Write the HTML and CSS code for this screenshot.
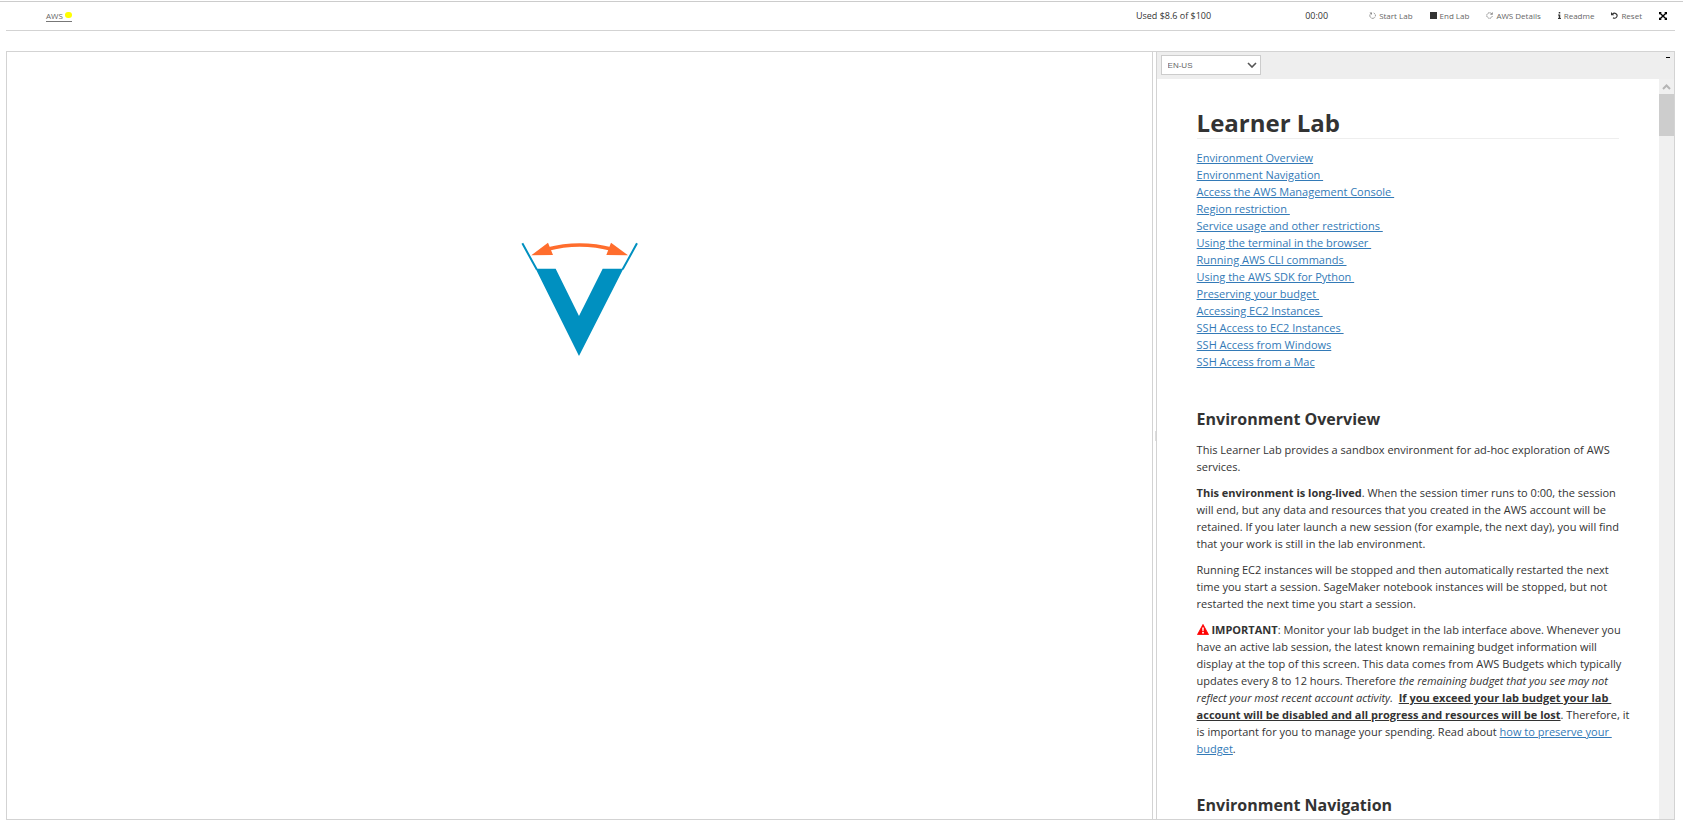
FILE: index.html
```html
<!DOCTYPE html>
<html lang="en">
<head>
<meta charset="utf-8">
<title>Learner Lab</title>
<link rel="stylesheet" href="styles.css">
</head>
<body>
<header class="topbar">
  <a class="aws" href="#aws">AWS <span class="status"></span></a>
  <div class="session">
    <span class="budget">Used $8.6 of $100</span>
    <span class="timer">00:00</span>
  </div>
  <nav class="actions">
    <button type="button"><svg class="icon faint" viewBox="0 0 14 14"><path d="M9.5 2A5.6 5.6 0 1 1 4 2.6" fill="none" stroke="currentColor" stroke-width="2" stroke-dasharray="3 1.2"/><path d="M1 1h5v5z" fill="currentColor"/></svg>Start Lab</button>
    <button type="button"><svg class="icon dark" viewBox="0 0 14 14"><path d="M0 0h14v14H0z" fill="currentColor"/></svg>End Lab</button>
    <button type="button"><svg class="icon faint" viewBox="0 0 14 14"><path d="M11 3.2A5.5 5.5 0 1 0 12.5 8" fill="none" stroke="currentColor" stroke-width="2" stroke-dasharray="3 1.2"/><path d="M13.5 0v5.5H8z" fill="currentColor"/></svg>AWS Details</button>
    <button type="button"><svg class="icon narrow dark" viewBox="0 0 6 14"><path d="M1.5 0h3v3h-3zM0 5h4.5v7H6v2H0v-2h1.5V7H0z" fill="currentColor"/></svg>Readme</button>
    <button type="button"><svg class="icon dark" viewBox="0 0 14 14"><path d="M3 4.5A5 5 0 1 1 4 11.5" fill="none" stroke="currentColor" stroke-width="2.2"/><path d="M0 0l6.500 6.500H0z" fill="currentColor"/></svg>Reset</button>
    <button type="button" class="expand" aria-label="Full screen"><svg class="icon" viewBox="0 0 14 14"><path d="M2 2l10 10M12 2L2 12" stroke="currentColor" stroke-width="2.400"/><path d="M0 0h5L0 5zM14 0v5L9 0zM0 14V9l5 5zM14 14H9l5-5z" fill="currentColor"/></svg></button>
  </nav>
</header>
<main class="workspace">
  <section class="terminal" aria-label="Terminal">
    <svg class="logo" viewBox="34 36 351 345" role="img" aria-label="Vocareum">
      <path d="M38 40L81 118M382 40L339 118" stroke="#0090c0" stroke-width="6"/>
      <path d="M78 116h60l70 142 71-142h62L208 378z" fill="#0090c0"/>
      <path d="M112 58Q210 32 308 58" fill="none" stroke="#ff6d2d" stroke-width="11"/>
      <path d="M65 76l50-38 15 37zM355 76l-51-38-14 37z" fill="#ff6d2d"/>
    </svg>
  </section>
  <div class="splitter"><span class="grip"></span></div>
  <section class="guide">
    <div class="guide-bar">
      <div class="picker">
        <select aria-label="Language"><option>EN-US</option></select>
        <svg class="chevron" viewBox="0 0 10 6"><path d="M1 1l4 4 4-4" fill="none" stroke="#555" stroke-width="1.600"/></svg>
      </div>
      <button type="button" class="minimize" aria-label="Minimize"><span></span></button>
    </div>
    <div class="guide-view">
      <article class="content">
        <h1>Learner Lab</h1>
        <ul class="toc">
          <li><a href="#overview">Environment Overview</a></li>
          <li><a href="#navigation">Environment Navigation&nbsp;</a></li>
          <li><a href="#console">Access the AWS Management Console&nbsp;</a></li>
          <li><a href="#region">Region restriction&nbsp;</a></li>
          <li><a href="#services">Service usage and other restrictions&nbsp;</a></li>
          <li><a href="#terminal">Using the terminal in the browser&nbsp;</a></li>
          <li><a href="#cli">Running AWS CLI commands&nbsp;</a></li>
          <li><a href="#sdk">Using the AWS SDK for Python&nbsp;</a></li>
          <li><a href="#budget">Preserving your budget&nbsp;</a></li>
          <li><a href="#ec2">Accessing EC2 Instances&nbsp;</a></li>
          <li><a href="#ssh">SSH Access to EC2 Instances&nbsp;</a></li>
          <li><a href="#windows">SSH Access from Windows</a></li>
          <li><a href="#mac">SSH Access from a Mac</a></li>
        </ul>
        <h2 id="overview">Environment Overview</h2>
        <p>This Learner Lab provides a sandbox environment for ad-hoc exploration of AWS<br>services.</p>
        <p><strong>This environment is long-lived</strong>. When the session timer runs to 0:00, the session<br>will end, but any data and resources that you created in the AWS account will be<br>retained. If you later launch a new session (for example, the next day), you will find<br>that your work is still in the lab environment.</p>
        <p>Running EC2 instances will be stopped and then automatically restarted the next<br>time you start a session. SageMaker notebook instances will be stopped, but not<br>restarted the next time you start a session.</p>
        <p><svg class="warning" viewBox="0 0 14 13" aria-hidden="true"><path d="M7 0.5L13.5 12.5H0.5z" fill="#f00" stroke="#f00" stroke-linejoin="round"/><path d="M6 4h2l-.3 4.5H6.3zM6 9.5h2v1.8H6z" fill="#fff"/></svg> <strong>IMPORTANT</strong>: Monitor your lab budget in the lab interface above. Whenever you<br>have an active lab session, the latest known remaining budget information will<br>display at the top of this screen. This data comes from AWS Budgets which typically<br>updates every 8 to 12 hours. Therefore <em>the remaining budget that you see may not<br>reflect your most recent account activity.</em>&nbsp; <strong><u>If you exceed your lab budget your lab&nbsp;<br>account will be disabled and all progress and resources will be lost</u></strong>. Therefore, it<br>is important for you to manage your spending. Read about <a href="#budget">how to preserve your&nbsp;<br>budget</a>.</p>
        <h2 id="navigation">Environment Navigation</h2>
      </article>
      <div class="scrollbar" aria-hidden="true">
        <svg class="scroll-up" viewBox="0 0 15 15"><path d="M4 10l3.5-3.5L11 10" fill="none" stroke="#b5b5b5" stroke-width="2"/></svg>
        <div class="thumb"></div>
      </div>
    </div>
  </section>
</main>
</body>
</html>
```
FILE: styles.css
```css
* { box-sizing: border-box; }

body {
  margin: 0;
  height: 100vh;
  padding: 1px 8px 8px 6px;
  display: flex;
  flex-direction: column;
  background: linear-gradient(#ccc, #ccc) 0 1px / 100% 1px no-repeat #fff;
  color: #333;
  font: 11px/17px "Open Sans", "Noto Sans", sans-serif;
  overflow: hidden;
}

button {
  padding: 0;
  border: 0;
  background: none;
  color: inherit;
  font: inherit;
}

.topbar {
  display: flex;
  align-items: center;
  height: 30px;
  padding: 0 8px 0 40px;
  border-bottom: 1px solid #d3d3d3;
  font-size: 8px;
  color: #666;
}

.aws {
  display: flex;
  align-items: center;
  gap: 2px;
  height: 12px;
  margin-right: auto;
  border-bottom: 1px solid #777;
  color: #666;
  text-decoration: none;
}

.status {
  width: 7px;
  height: 6px;
  border-radius: 3px;
  background: #ff0;
}

.session {
  display: flex;
  gap: 94px;
  margin-right: 41px;
  font-size: 9px;
  color: #333;
}

.actions {
  display: flex;
  align-items: center;
  gap: 17px;
}

.actions button {
  display: flex;
  align-items: center;
  gap: 3px;
}

.icon { width: 7px; height: 7px; }
.narrow { width: 3px; }
.dark { color: #333; }
.faint { color: #888; }
.actions .expand { color: #000; }
.expand .icon { width: 8px; height: 8px; }

.workspace {
  display: flex;
  flex: 1;
  min-height: 0;
  margin-top: 20px;
  border: 1px solid #d3d3d3;
}

.terminal {
  flex: 1;
  padding-top: 190px;
  border-right: 1px solid #d3d3d3;
  text-align: center;
}

.logo { width: 117px; height: 115px; }

.splitter {
  display: flex;
  align-items: center;
  justify-content: flex-end;
  width: 3px;
}

.grip { width: 1px; height: 10px; background: #ddd; }

.guide {
  display: flex;
  flex-direction: column;
  width: 31.1%;
  border-left: 1px solid #d3d3d3;
}

.guide-bar {
  display: flex;
  justify-content: space-between;
  align-items: flex-start;
  height: 27px;
  padding: 3px 4px;
  background: #eee;
}

.picker { display: grid; align-items: center; }

.picker select {
  grid-area: 1 / 1;
  width: 100px;
  height: 20px;
  padding: 0 6px;
  border: 1px solid #ccc;
  border-radius: 0;
  appearance: none;
  background: #fff;
  color: #666;
  font: 8px "Liberation Sans", sans-serif;
}

.chevron {
  grid-area: 1 / 1;
  justify-self: end;
  width: 10px;
  height: 6px;
  margin-right: 4px;
  pointer-events: none;
}

.minimize { display: flex; padding-top: 2px; }
.minimize span { width: 4px; height: 1px; background: #000; }

.guide-view {
  display: flex;
  flex: 1;
  min-height: 0;
}

.content {
  flex: 1;
  min-width: 0;
  padding: 28px 40px 0;
  overflow: hidden;
  white-space: nowrap;
}

h1 {
  margin: 0 0 10px;
  padding-top: 1px;
  border-bottom: 1px solid #eee;
  font-size: 24px;
  line-height: 30px;
  font-weight: 700;
}

h2 {
  margin: 0 0 10px;
  font-size: 16px;
  line-height: 24px;
  font-weight: 700;
}

p { margin: 0 0 9px; }
.toc { margin: 0 0 37px; padding: 0; list-style: none; }
.content a { color: #337ab7; text-decoration: underline; }
.content p + h2 { margin-top: 36px; }

.warning { width: 12px; height: 11px; vertical-align: -1px; }

.scrollbar { width: 15px; background: #f0f0f0; }
.scroll-up { display: block; width: 15px; height: 15px; }
.thumb { height: 42px; background: #cdcdcd; }
```
